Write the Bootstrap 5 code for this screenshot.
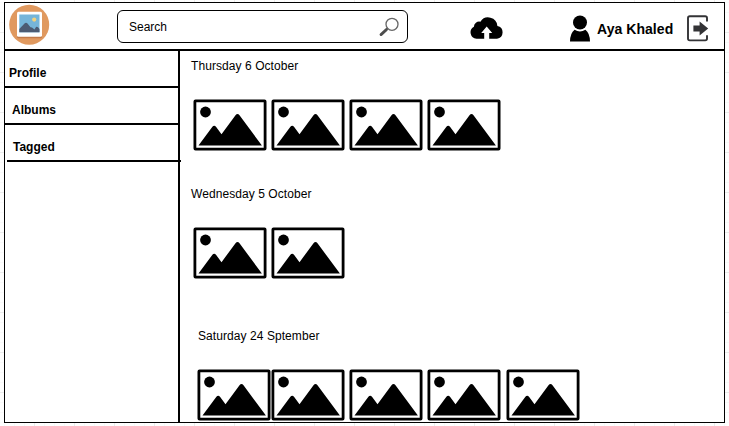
<!DOCTYPE html>
<html lang="en">
<head>
<meta charset="utf-8">
<meta name="viewport" content="width=device-width, initial-scale=1">
<title>Photo library</title>
<link href="https://cdn.jsdelivr.net/npm/bootstrap@5.3.0/dist/css/bootstrap.min.css" rel="stylesheet">
<style>
body{font-family:"Liberation Sans",Arial,sans-serif;font-size:12px;line-height:14px;color:#000;width:729px;height:426px;overflow:hidden;
padding:2px 4px 3px;background-color:#fff;
background-image:linear-gradient(90deg,#ececec 1px,transparent 1px),linear-gradient(#ececec 1px,transparent 1px),linear-gradient(90deg,#f9f9f9 1px,transparent 1px),linear-gradient(#f9f9f9 1px,transparent 1px);
background-size:40px 40px,40px 40px,10px 10px,10px 10px;background-position:34px 0,0 32px,4px 0,0 2px}
svg{display:block;flex:none}
.frame{width:721px;height:421px;border:1px solid #000;background:#fff}
.topbar{height:48px;border-bottom:2px solid #000;padding-left:4px}
.logo{margin:-3px 0 0}
.search-box{width:291px;height:33px;border:1px solid #000;border-radius:6px;margin-left:67px;padding:0 8px 0 11px;background:#fff}
.search-box input{font-size:12px;line-height:14px;color:#000;height:14px;width:200px;margin-top:1px}
.search-box svg{margin-top:1px}
.search-box input::placeholder{color:#000;opacity:1}
.upload{margin:4px 0 0 62px}
.user{margin:4px 0 0 66px;font-size:14px;line-height:16px}
.user-name{margin:2px 0 0 7px;letter-spacing:.05px}
.logout{margin:5px 0 0 14px}
.side{width:175px;border-right:2px solid #000}
.side a{height:37px;border-bottom:2px solid #000;color:#000;padding:15px 0 0 4px}
.side a:nth-child(2){padding-left:7px}
.side a:nth-child(3){padding-left:6px;margin-left:2px;margin-right:-3px}
.days{padding-left:11px}
.day{height:128px;padding-top:8px}
.day:nth-child(2){height:142px}
.day h2{font-size:12px;line-height:14px;font-weight:400;letter-spacing:.07px;margin:0 0 26px}
.shots{gap:4px;margin-left:2px}
.day.late{height:100px}
.late h2{margin-left:7px}
.late .shots{margin-left:6px}
.late .shots svg:first-child{margin-right:-4px}
.late .shots svg:last-child{margin-left:1px}
</style>
</head>
<body>
<svg width="0" height="0" class="position-absolute" aria-hidden="true">
<symbol id="photo" viewBox="-.5 -.2 74 52">
<rect x="1.4" y="1.6" width="70.2" height="48.4" rx=".6" fill="#fff" stroke="#000" stroke-width="2.8"/>
<circle cx="12" cy="12.8" r="5.4"/>
<path d="M5 46.4 18.9 27.6Q20.7 25.4 22.5 27.6L28 35 42 16Q44 13.6 46 16L68.4 46.4Z"/>
</symbol>
</svg>
<div class="frame d-flex flex-column">
<header class="topbar d-flex align-items-center flex-shrink-0">
<svg class="logo" width="41" height="41" viewBox="0 0 41 41">
<circle cx="20.2" cy="20.7" r="20" fill="#e0995f"/>
<rect x="8" y="9.3" width="25" height="25" rx="1.5" fill="#c27a48"/>
<rect x="8" y="7.8" width="25" height="25" rx="1.5" fill="#fff"/>
<rect x="10.3" y="10.5" width="20.2" height="17.8" fill="#76b5d9"/>
<circle cx="25.2" cy="15.6" r="2.1" fill="#f2d37f"/>
<path d="M10.3 25 15.5 19.5Q17 18 18.5 19.5L21.5 23.3 23 23.5 25.5 25.5 27 23Q28 22.3 29 23.3L30.5 25V28.3H10.3Z" fill="#4c5b73"/>
</svg>
<form class="search-box d-flex align-items-center justify-content-between">
<input class="border-0 p-0 bg-transparent" type="text" placeholder="Search" aria-label="Search">
<svg width="20" height="20" viewBox="0 0 20 20" fill="none">
<circle cx="13" cy="7.3" r="6" stroke="#666" stroke-width="1.3"/>
<path d="M8.7 11.4 7 13" stroke="#666" stroke-width="1.5"/>
<path d="M7.4 12.6 2 17.6" stroke="#4d4d4d" stroke-width="2.8" stroke-linecap="round"/>
</svg>
</form>
<svg class="upload" width="34" height="22" viewBox="0 -.6 34 22">
<path d="M6.5 21.2A6.4 6.4 0 0 1 3.9 9.2 5.2 5.2 0 0 1 10.4 4.2 9.2 9.2 0 0 1 27.4 8.4 6.5 6.5 0 0 1 27 21.2Z"/>
<path d="M16.7 9 22.2 15.5H19.2V21.5H14.2V15.5H11.2Z" fill="#fff"/>
</svg>
<div class="user d-flex align-items-center">
<svg width="20" height="27" viewBox="0 0 20 27">
<circle cx="10" cy="7.5" r="7"/>
<path d="M4.6 14.8Q10 18.2 15.4 14.8 19.8 18 20 26.5H0Q.2 18 4.6 14.8Z"/>
</svg>
<strong class="user-name text-nowrap">Aya Khaled</strong>
</div>
<svg class="logout" width="22" height="27" viewBox="0 0 22 27">
<path d="M20 6.5V3Q20 1.2 18.2 1.2H2.8Q1 1.2 1 3V23.6Q1 25.4 2.8 25.4H18.2Q20 25.4 20 23.6V20.2" fill="none" stroke="#333336" stroke-width="1.9"/>
<path d="M6.4 10.4H12.6V6.4L21.2 13.5 12.6 20.6V16.6H6.4Z" fill="#333336"/>
</svg>
</header>
<div class="d-flex flex-grow-1">
<nav class="side d-flex flex-column flex-shrink-0 fw-bold">
<a class="text-decoration-none" href="#">Profile</a>
<a class="text-decoration-none" href="#">Albums</a>
<a class="text-decoration-none" href="#">Tagged</a>
</nav>
<main class="days flex-grow-1">
<section class="day"><h2>Thursday 6 October</h2>
<div class="shots d-flex"><svg width="74" height="52"><use href="#photo"/></svg><svg width="74" height="52"><use href="#photo"/></svg><svg width="74" height="52"><use href="#photo"/></svg><svg width="74" height="52"><use href="#photo"/></svg></div></section>
<section class="day"><h2>Wednesday 5 October</h2>
<div class="shots d-flex"><svg width="74" height="52"><use href="#photo"/></svg><svg width="74" height="52"><use href="#photo"/></svg></div></section>
<section class="day late"><h2>Saturday 24 Sptember</h2>
<div class="shots d-flex"><svg width="74" height="52"><use href="#photo"/></svg><svg width="74" height="52"><use href="#photo"/></svg><svg width="74" height="52"><use href="#photo"/></svg><svg width="74" height="52"><use href="#photo"/></svg><svg width="74" height="52"><use href="#photo"/></svg></div></section>
</main>
</div>
</div>
<script src="https://cdn.jsdelivr.net/npm/bootstrap@5.3.0/dist/js/bootstrap.bundle.min.js"></script>
</body>
</html>
